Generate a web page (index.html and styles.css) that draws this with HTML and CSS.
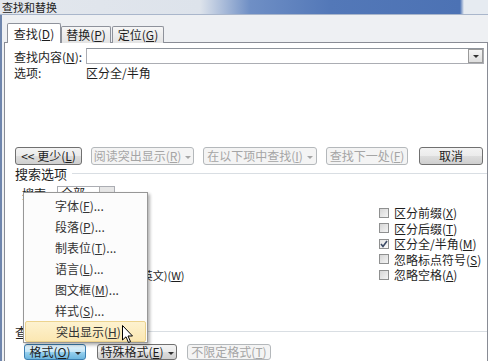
FILE: index.html
```html
<!DOCTYPE html>
<html lang="zh-CN">
<head>
    <meta charset="UTF-8">
    <link rel="stylesheet" href="styles.css">
</head>
<body>
    <div class="window">
        <div class="titlebar"><span class="title">查找和替换</span></div>
        <div class="client">
            <div class="tabs">
                <div class="tab active">查找(<u>D</u>)</div>
                <div class="tab t2">替换(<u>P</u>)</div>
                <div class="tab t3">定位(<u>G</u>)</div>
            </div>
            <div class="panel">
                <div class="find-row">
                    <span class="lbl">查找内容(<u>N</u>):</span>
                    <div class="combo"><span class="drop"><span class="caret"></span></span></div>
                </div>
                <div class="opt-row">
                    <span class="lbl">选项:</span>
                    <span>区分全/半角</span>
                </div>

                <div class="actions">
                    <div class="btn b1">&lt;&lt; 更少(<u>L</u>)</div>
                    <div class="btn off b2">阅读突出显示(<u>R</u>)<span class="caret"></span></div>
                    <div class="btn off b3">在以下项中查找(<u>I</u>)<span class="caret"></span></div>
                    <div class="btn off b4">查找下一处(<u>F</u>)</div>
                    <div class="btn b5">取消</div>
                </div>

                <div class="section-head"><span>搜索选项</span><span class="rule"></span></div>
                <div class="search-row">
                    <span class="lbl2">搜索:</span>
                    <div class="small-combo">全部<span class="sdrop"><span class="caret"></span></span></div>
                </div>

                <div class="opts">
                    <div class="col left">
                        <div class="opt"><span class="cb"></span><span>区分大小写(<u>H</u>)</span></div>
                        <div class="opt"><span class="cb"></span><span>全字匹配(<u>Y</u>)</span></div>
                        <div class="opt"><span class="cb"></span><span>使用通配符(<u>U</u>)</span></div>
                        <div class="opt"><span class="cb"></span><span>同音(英文)(<u>K</u>)</span></div>
                        <div class="opt"><span class="cb"></span><span>查找单词的所有形式(英文)(<u>W</u>)</span></div>
                    </div>
                    <div class="col">
                        <div class="opt"><span class="cb"></span><span>区分前缀(<u>X</u>)</span></div>
                        <div class="opt"><span class="cb"></span><span>区分后缀(<u>T</u>)</span></div>
                        <div class="opt"><span class="cb checked"><svg width="8" height="8" viewBox="0 0 8 8"><path d="M1 4 L3 6.5 L7 1" fill="none" stroke="#3b4a66" stroke-width="1.6"/></svg></span><span>区分全/半角(<u>M</u>)</span></div>
                        <div class="opt"><span class="cb"></span><span>忽略标点符号(<u>S</u>)</span></div>
                        <div class="opt"><span class="cb"></span><span>忽略空格(<u>A</u>)</span></div>
                    </div>
                </div>

                <div class="section-head find-head"><span>查找</span><span class="rule"></span></div>
                <div class="bottom-actions">
                    <div class="btn pressed c1">格式(<u>O</u>)<span class="caret"></span></div>
                    <div class="btn c2">特殊格式(<u>E</u>)<span class="caret"></span></div>
                    <div class="btn off c3">不限定格式(<u>T</u>)</div>
                </div>
            </div>
        </div>

        <!-- popup opened from the 格式 button -->
        <div class="menu">
            <div class="menu-item">字体(<u>F</u>)...</div>
            <div class="menu-item">段落(<u>P</u>)...</div>
            <div class="menu-item">制表位(<u>T</u>)...</div>
            <div class="menu-item">语言(<u>L</u>)...</div>
            <div class="menu-item">图文框(<u>M</u>)...</div>
            <div class="menu-item">样式(<u>S</u>)...</div>
            <div class="menu-item hot">突出显示(<u>H</u>)</div>
        </div>
        <svg class="cursor" width="12" height="19" viewBox="0 0 12 19">
            <path d="M0.5 0.5 L0.5 15 L4 11.8 L6.5 17.5 L8.5 16.6 L6 11 L10.5 11 Z" fill="#fff" stroke="#000" stroke-width="1"/>
        </svg>
    </div>
</body>
</html>
```

FILE: styles.css
```css
body {
    margin: 0;
    width: 492px;
    height: 361px;
    overflow: hidden;
    background: #fff;
    font-family: "Noto Sans CJK SC", "Liberation Sans", sans-serif;
    font-size: 12px;
    color: #1e1e1e;
}
u {
    text-decoration: underline;
}
.window {
    position: relative;
    width: 488px;
    height: 361px;
    background: #eef0f3;
    overflow: hidden;
}
.titlebar {
    height: 14px;
    border-bottom: 1px solid #a9b6cb;
    background: linear-gradient(to right, #e3e7ed 0, #dde3eb 200px, #6f8fc5 250px, #5378b8 330px, #4c72b4 460px, #e6ebf1 464px);
}
.title {
    display: block;
    padding-left: 2px;
    line-height: 14px;
    font-size: 11px;
    color: #222;
}
.client {
    border-left: 2px solid #6f86ad;
    padding: 8px 0 0 2px;
    height: 346px;
    box-sizing: border-box;
}
.tabs {
    display: flex;
    align-items: flex-end;
    padding-left: 3px;
    height: 20px;
    margin-bottom: -1px;
    position: relative;
    z-index: 1;
}
.tab {
    height: 17px;
    box-sizing: border-box;
    border: 1px solid #8e929b;
    border-bottom: none;
    background: linear-gradient(#f6f6f6, #e4e4e4);
    text-align: center;
    line-height: 16px;
    font-size: 12px;
    border-radius: 2px 2px 0 0;
}
.tab.active {
    width: 54px;
    height: 20px;
    background: #fff;
    line-height: 19px;
}
.tab.t2 {
    width: 50px;
}
.tab.t3 {
    width: 52px;
    margin-left: 1px;
}
.panel {
    width: 484px;
    height: 330px;
    box-sizing: border-box;
    background: #fff;
    border: 1px solid #898c95;
    overflow: hidden;
}
.find-row {
    display: flex;
    align-items: center;
    margin-top: 5px;
    height: 16px;
    padding-left: 9px;
    padding-right: 3px;
}
.lbl {
    width: 72px;
    flex: none;
}
.combo {
    flex: 1;
    height: 16px;
    box-sizing: border-box;
    border: 1px solid #abadb3;
    border-top-color: #8e949c;
    position: relative;
}
.drop {
    position: absolute;
    right: 0;
    top: 0;
    width: 15px;
    height: 14px;
    box-sizing: border-box;
    border: 1px solid #9a9a9a;
    background: linear-gradient(#f6f6f6, #dedede);
    display: flex;
    align-items: center;
    justify-content: center;
}
.caret {
    display: inline-block;
    width: 0;
    height: 0;
    border-left: 3px solid transparent;
    border-right: 3px solid transparent;
    border-top: 3px solid #333;
    margin-left: 4px;
    vertical-align: middle;
}
.drop .caret,
.sdrop .caret {
    margin-left: 0;
}
.opt-row {
    display: flex;
    margin-top: 3px;
    height: 12px;
    line-height: 12px;
    padding-left: 9px;
}
.actions {
    display: flex;
    gap: 9px;
    margin-top: 68px;
    height: 18px;
    padding-left: 10px;
    padding-right: 4px;
}
.btn {
    height: 18px;
    box-sizing: border-box;
    border: 1px solid #707070;
    border-radius: 3px;
    background: linear-gradient(#f3f3f3, #ebebeb 50%, #dddddd 51%, #cfcfcf);
    text-align: center;
    line-height: 16px;
    font-size: 12px;
    white-space: nowrap;
}
.btn.off {
    border-color: #b4b8bb;
    background: #f4f4f4;
    color: #a5a5a5;
}
.btn.off .caret {
    border-top-color: #a5a5a5;
}
.b1 { width: 67px; }
.b2 { width: 103px; }
.b3 { width: 114px; }
.b4 { width: 82px; }
.b5 { width: 64px; margin-left: auto; }
.section-head {
    display: flex;
    align-items: center;
    height: 14px;
    margin-top: 1px;
    padding-left: 10px;
    font-size: 13px;
}
.rule {
    flex: 1;
    border-top: 1px solid #d9dee3;
    margin-left: 5px;
}
.search-row {
    display: flex;
    align-items: center;
    margin-top: 6px;
    height: 14px;
    padding-left: 17px;
}
.lbl2 {
    width: 35px;
}
.small-combo {
    width: 58px;
    height: 14px;
    box-sizing: border-box;
    border: 1px solid #abadb3;
    padding-left: 3px;
    line-height: 12px;
    position: relative;
}
.sdrop {
    position: absolute;
    right: 0;
    top: 0;
    width: 14px;
    height: 12px;
    background: #e6e6e6;
    border-left: 1px solid #b0b0b0;
    display: flex;
    align-items: center;
    justify-content: center;
}
.opts {
    display: grid;
    grid-template-columns: 374px 1fr;
    margin-top: 5px;
}
.col.left {
    padding-left: 21px;
    font-size: 11px;
}
.opt {
    display: flex;
    align-items: center;
    gap: 5px;
    height: 15.5px;
    white-space: nowrap;
}
.col.left .opt {
    gap: 3px;
}
.cb {
    width: 10px;
    height: 10px;
    flex: none;
    box-sizing: border-box;
    border: 1px solid #8f9090;
    background: linear-gradient(135deg, #d6d6d6, #f4f4f4);
    display: flex;
    align-items: center;
    justify-content: center;
}
.cb.checked {
    background: linear-gradient(135deg, #e4e4e4, #fafafa);
}
.find-head {
    margin-top: 42px;
    height: 13px;
}
.bottom-actions {
    display: flex;
    margin-top: 6px;
    padding-left: 19px;
}
.bottom-actions .btn {
    height: 16px;
    line-height: 14px;
}
.btn.pressed {
    border-color: #3c7fb1;
    background: linear-gradient(#e5f4fc, #c4e5f6 50%, #98d1ef 51%, #6cb6de);
}
.c1 { width: 62px; }
.c2 { width: 80px; margin-left: 11px; }
.c3 { width: 84px; margin-left: 10px; }
.menu {
    position: absolute;
    left: 23px;
    top: 192px;
    width: 125px;
    height: 151px;
    box-sizing: border-box;
    border: 1px solid #979797;
    background: #fcfcfc;
    padding-top: 2px;
    box-shadow: 2px 2px 3px rgba(0, 0, 0, 0.3);
}
.menu-item {
    height: 21px;
    line-height: 21px;
    padding-left: 31px;
    color: #333;
}
.menu-item.hot {
    height: 21px;
    box-sizing: border-box;
    line-height: 19px;
    padding-left: 30px;
    margin: 0 1px;
    background: linear-gradient(#fdf2cf, #fbe7b2);
    border: 1px solid #ecd38e;
    border-radius: 2px;
}
.cursor {
    position: absolute;
    left: 122px;
    top: 325px;
}
```
